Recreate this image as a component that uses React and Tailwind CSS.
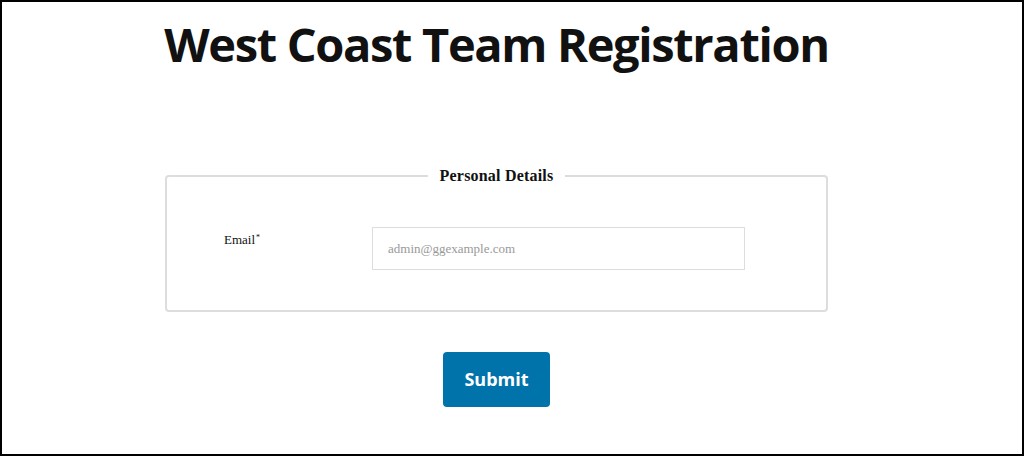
export default function App() {
  return (
    <div className="w-[1024px] h-[456px] border-2 border-black bg-white overflow-hidden">
      <div className="ml-[163px] w-[663px] flex flex-col items-center">
        <h1 className="mt-[10px] text-[47px] leading-[64px] font-bold text-[#111] whitespace-nowrap tracking-[-1.35px]" style={{ fontFamily: '"Open Sans", sans-serif' }}>
          West Coast Team Registration
        </h1>

        <fieldset className="mt-[88px] w-full h-[148px] border-2 border-[#dddddd] rounded-[4px] px-[57px] pt-[39px]" style={{ fontFamily: '"Liberation Serif", serif' }}>
          <legend className="mx-auto px-[12px] text-[16px] font-bold text-[#111] tracking-[0.2px]">Personal Details</legend>
          <div className="flex items-start">
            <label className="w-[148px] pt-[3px] text-[13px] text-[#111]">
              Email<sup className="text-[8px] ml-px">*</sup>
            </label>
            <input
              type="email"
              placeholder="admin@ggexample.com"
              className="w-[373px] h-[43px] border border-[#dddddd] px-[15px] text-[13px] text-[#333] placeholder:text-[#999] outline-none"
              style={{ fontFamily: '"Liberation Serif", serif' }}
            />
          </div>
        </fieldset>

        <button className="mt-[40px] w-[107px] h-[55px] rounded-[4px] bg-[#0073aa] text-white text-[18px] font-bold" style={{ fontFamily: '"Open Sans", sans-serif' }}>
          Submit
        </button>
      </div>
    </div>
  );
}
